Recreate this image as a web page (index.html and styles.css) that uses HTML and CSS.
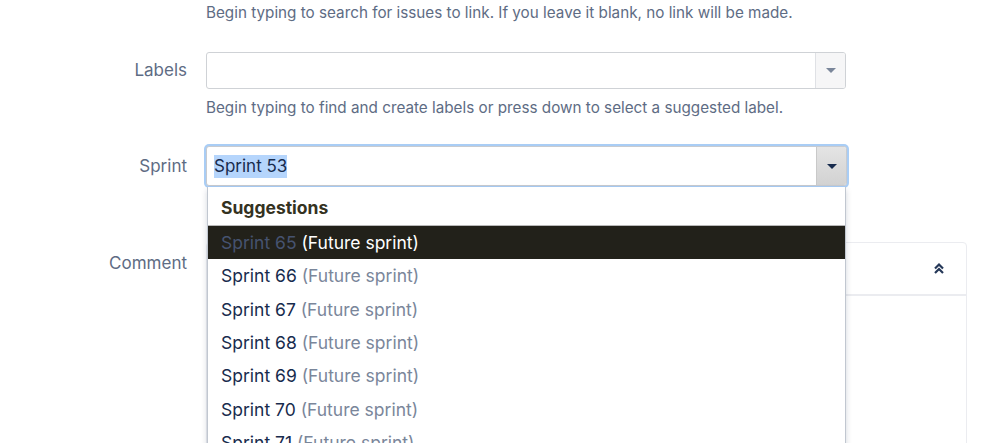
FILE: index.html
```html
<!DOCTYPE html>
<html>
<head>
<meta charset="utf-8">
<link rel="stylesheet" href="styles.css">
</head>
<body>
<div class="form">
  <div class="row row-help1">
    <div class="label"></div>
    <div class="field"><div class="help">Begin typing to search for issues to link. If you leave it blank, no link will be made.</div></div>
  </div>
  <div class="row row-labels">
    <div class="label">Labels</div>
    <div class="field">
      <div class="select">
        <div class="select-input"></div>
        <div class="select-btn"><span class="caret"></span></div>
      </div>
      <div class="help help2">Begin typing to find and create labels or press down to select a suggested label.</div>
    </div>
  </div>
  <div class="row row-sprint">
    <div class="label">Sprint</div>
    <div class="field">
      <div class="select focused">
        <div class="select-input"><span class="sel">Sprint 53</span></div>
        <div class="select-btn"><span class="caret"></span></div>
      </div>
      <div class="dropdown">
        <div class="dd-head">Suggestions</div>
        <div class="dd-item active"><span class="name">Sprint 65</span> <span class="meta">(Future sprint)</span></div>
        <div class="dd-item"><span class="name">Sprint 66</span> <span class="meta">(Future sprint)</span></div>
        <div class="dd-item"><span class="name">Sprint 67</span> <span class="meta">(Future sprint)</span></div>
        <div class="dd-item"><span class="name">Sprint 68</span> <span class="meta">(Future sprint)</span></div>
        <div class="dd-item"><span class="name">Sprint 69</span> <span class="meta">(Future sprint)</span></div>
        <div class="dd-item"><span class="name">Sprint 70</span> <span class="meta">(Future sprint)</span></div>
        <div class="dd-item"><span class="name">Sprint 71</span> <span class="meta">(Future sprint)</span></div>
      </div>
    </div>
  </div>
  <div class="row row-comment">
    <div class="label">Comment</div>
    <div class="field">
      <div class="editor">
        <div class="toolbar">
          <svg class="collapse" width="12" height="13" viewBox="0 0 12 13"><path d="M2 6.5 L6 2.5 L10 6.5 M2 11 L6 7 L10 11" fill="none" stroke="#253858" stroke-width="2.2"/></svg>
        </div>
        <div class="editor-body"></div>
      </div>
    </div>
  </div>
</div>
</body>
</html>
```
FILE: styles.css
```css
* { box-sizing: border-box; }
html, body { margin: 0; padding: 0; background: #fff; }
body {
  font-family: Inter, "Liberation Sans", Arial, sans-serif;
  color: #172b4d;
  height: 443px;
  overflow: hidden;
}
.form { padding-top: 3px; }
.row {
  display: grid;
  grid-template-columns: 187px 761px;
  column-gap: 19px;
}
.label {
  text-align: right;
  font-size: 17px;
  color: #5e6c84;
}
.help {
  font-size: 15.25px;
  line-height: 20px;
  color: #5e6c84;
  white-space: nowrap;
}
.row-labels { margin-top: 29px; }
.row-labels .label { line-height: 37px; }
.select {
  width: 640px;
  height: 37px;
  display: flex;
  border: 1px solid #cfd2d6;
  border-radius: 3px;
  background: #fff;
}
.select-input {
  flex: 1;
  padding: 0 7px;
  display: flex;
  align-items: center;
}
.select-btn {
  width: 30px;
  border-left: 1px solid #dfe1e5;
  background: #f6f6f7;
  display: flex;
  align-items: center;
  justify-content: center;
  border-radius: 0 2px 2px 0;
}
.caret {
  width: 0; height: 0;
  border-left: 5px solid transparent;
  border-right: 5px solid transparent;
  border-top: 5px solid #7a869a;
}
.help2 { margin-top: 9px; }
.row-sprint { margin-top: 28px; }
.row-sprint .label { line-height: 40px; }
.row-sprint .field { position: relative; }
.select.focused {
  height: 40px;
  width: 641px;
  border-color: #c8cbd0;
  box-shadow: 0 0 0 2px #a9cdf5;
}
.select.focused .select-btn {
  background: linear-gradient(#e4e4e4, #d2d2d2);
  border-left-color: #c9c9c9;
}
.select.focused .caret { border-top-color: #172b4d; }
.sel {
  font-size: 17px;
  line-height: 23px;
  background: #b5d5fc;
  color: #172b4d;
}
.dropdown {
  position: absolute;
  top: 41px;
  left: 1px;
  width: 639px;
  background: #fff;
  border: 1px solid #c1c7d0;
  border-top: none;
  box-shadow: 0 3px 6px rgba(9, 30, 66, 0.18);
  z-index: 5;
}
.dd-head {
  height: 39px;
  line-height: 41px;
  padding-left: 13px;
  font-weight: 700;
  font-size: 17.5px;
  color: #34321f;
  border-bottom: 1px solid #b8b8b8;
}
.dd-item {
  height: 33.35px;
  line-height: 34px;
  padding-left: 13px;
  font-size: 17.5px;
  color: #172b4d;
  white-space: nowrap;
}
.dd-item .meta { color: #7a869a; }
.dd-item.active { background: #22211a; }
.dd-item.active .name { color: #465370; }
.dd-item.active .meta { color: #fff; }
.row-comment { margin-top: 56px; }
.row-comment .label { line-height: 20px; padding-top: 11px; }
.editor {
  width: 761px;
  height: 220px;
  border: 1px solid #ebecf0;
  border-radius: 4px;
}
.toolbar {
  height: 53px;
  border-bottom: 2px solid #ebecf0;
  display: flex;
  align-items: center;
  justify-content: flex-end;
  padding-right: 21px;
}
.collapse { display: block; }
```
